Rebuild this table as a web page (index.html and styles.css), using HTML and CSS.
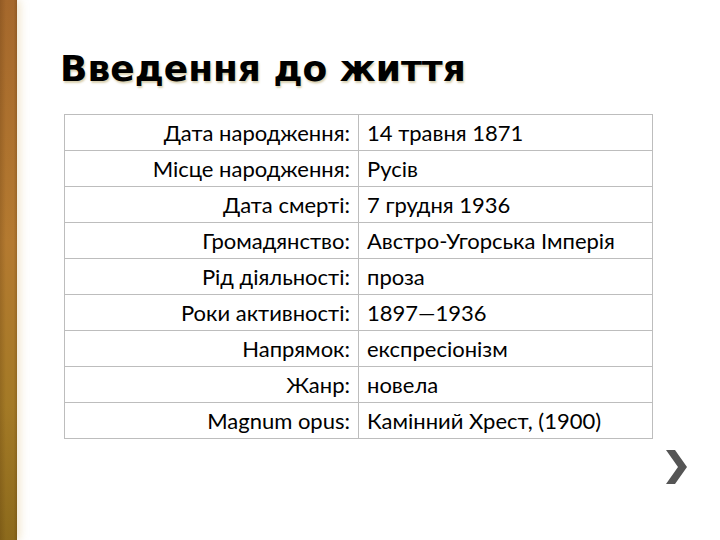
FILE: index.html
```html
<!DOCTYPE html>
<html lang="uk">
<head>
<meta charset="utf-8">
<link rel="stylesheet" href="styles.css">
</head>
<body>
<div class="slide">
  <div class="side"></div>
  <div class="content">
    <h1 class="title">Введення до життя</h1>
    <table class="info">
      <tr><td class="k">Дата народження:</td><td class="v">14 травня 1871</td></tr>
      <tr><td class="k">Місце народження:</td><td class="v">Русів</td></tr>
      <tr><td class="k">Дата смерті:</td><td class="v">7 грудня 1936</td></tr>
      <tr><td class="k">Громадянство:</td><td class="v">Австро-Угорська Імперія</td></tr>
      <tr><td class="k">Рід діяльності:</td><td class="v">проза</td></tr>
      <tr><td class="k">Роки активності:</td><td class="v">1897—1936</td></tr>
      <tr><td class="k">Напрямок:</td><td class="v">експресіонізм</td></tr>
      <tr><td class="k">Жанр:</td><td class="v">новела</td></tr>
      <tr><td class="k">Magnum opus:</td><td class="v">Камінний Хрест, (1900)</td></tr>
    </table>
  </div>
  <div class="next">
    <svg width="26" height="34" viewBox="0 0 26 34"><path d="M2 0 L11 0 L23 17 L11 34 L2 34 L14 17 Z" fill="#555"/></svg>
  </div>
</div>
</body>
</html>
```
FILE: styles.css
```css
html, body { margin: 0; padding: 0; }
body { width: 720px; height: 540px; overflow: hidden; background: #fff; }
.slide { position: relative; width: 720px; height: 540px; display: flex; }
.side {
  width: 17px; flex: none;
  background: linear-gradient(to bottom, #a5682c 0%, #b47a30 45%, #a47a26 75%, #8c6a1c 100%);
  box-shadow: 3px 0 9px rgba(215,180,110,0.35);
  position: relative;
}
.side::after {
  content: ""; position: absolute; inset: 0;
  background: linear-gradient(to right, rgba(60,30,0,0.18) 0%, rgba(0,0,0,0) 35%, rgba(0,0,0,0) 80%, rgba(60,30,0,0.2) 100%);
}
.content { flex: 1; padding-left: 43px; padding-top: 44px; }
.title {
  margin: 0;
  font-family: "DejaVu Sans", sans-serif;
  font-weight: bold;
  font-size: 36px;
  line-height: 50px;
  color: #000;
  text-shadow: 1px 2px 2px rgba(170,150,80,0.45);
}
.info {
  margin-top: 20px;
  margin-left: 4px;
  border-collapse: collapse;
  width: 589px;
  font-family: "Lato", "Liberation Sans", sans-serif;
  font-size: 22px;
  color: #000;
}
.info td {
  border: 1px solid #bdbdbd;
  height: 35px;
  padding: 0 8px;
  white-space: nowrap;
}
.info td.k { text-align: right; width: 277px; }
.info td.v { text-align: left; }
.next { position: absolute; left: 664px; top: 450px; }
```
